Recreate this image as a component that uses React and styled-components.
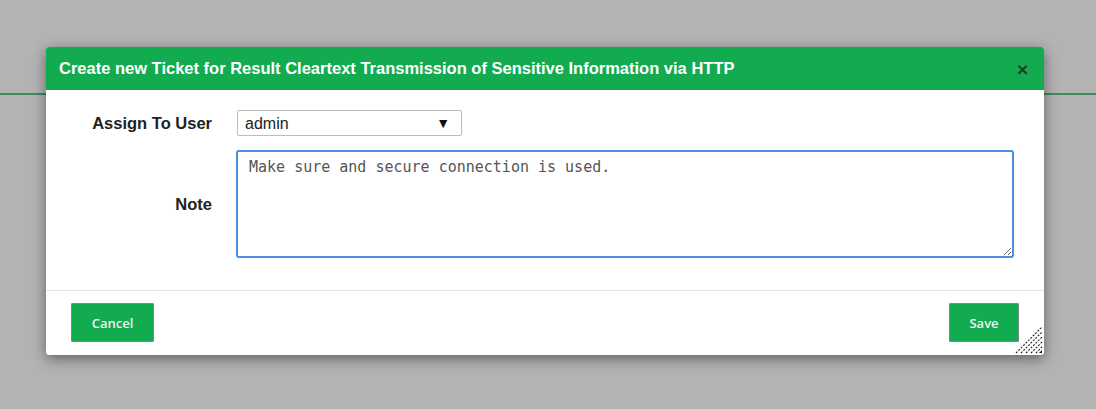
import React from "react";
import styled, { createGlobalStyle } from "styled-components";

const GlobalStyle = createGlobalStyle`
  html, body {
    margin: 0;
    padding: 0;
    background: #b3b3b3;
    font-family: "Liberation Sans", Arial, sans-serif;
  }
`;

const Page = styled.div`
  position: relative;
  width: 1096px;
  height: 409px;
  overflow: hidden;
  background: #b3b3b3;
`;

const PageHeader = styled.div`
  height: 93px;
  border-bottom: 2px solid #3f8b5c;
`;

const Dialog = styled.div`
  position: absolute;
  left: 46px;
  top: 47px;
  width: 998px;
  background: #fff;
  border-radius: 3px;
  box-shadow: 0 4px 14px rgba(0, 0, 0, 0.45);
  display: flex;
  flex-direction: column;
`;

const TitleBar = styled.div`
  height: 43px;
  background: #13ab50;
  border-radius: 3px 3px 0 0;
  display: flex;
  align-items: center;
  justify-content: space-between;
  padding: 0 16px 0 13px;
`;

const Title = styled.span`
  color: #fff;
  font-weight: bold;
  font-size: 16.5px;
`;

const Close = styled.span`
  color: #1d3d2a;
  font-weight: bold;
  font-size: 19px;
  line-height: 1;
  margin-top: 2px;
`;

const Body = styled.div`
  display: grid;
  grid-template-columns: 166px 778px;
  column-gap: 24px;
  row-gap: 14px;
  align-items: center;
  padding: 20px 0 32px;
  border-bottom: 1px solid #e4e4e4;
`;

const Label = styled.label`
  text-align: right;
  font-weight: bold;
  font-size: 16.5px;
  color: #222;
`;

const SelectWrap = styled.div`
  position: relative;
  width: 225px;
  margin-left: 1px;
`;

const Select = styled.select`
  appearance: none;
  width: 100%;
  height: 26px;
  border: 1px solid #bdbdbd;
  border-radius: 2px;
  background: #fff;
  font-family: "Liberation Sans", Arial, sans-serif;
  font-size: 16px;
  color: #222;
  padding: 0 7px;
  outline: none;
`;

const Arrow = styled.span`
  position: absolute;
  right: 12px;
  top: 5px;
  font-size: 14px;
  color: #111;
  pointer-events: none;
`;

const Note = styled.textarea`
  box-sizing: border-box;
  width: 778px;
  height: 108px;
  border: 2px solid #4a8ee0;
  border-radius: 3px;
  padding: 6px 11px;
  font-family: "DejaVu Sans Mono", monospace;
  font-size: 15px;
  color: #555;
  outline: none;
  resize: both;
`;

const Footer = styled.div`
  position: relative;
  display: flex;
  justify-content: space-between;
  padding: 12px 25px 13px 25px;
`;

const Button = styled.button`
  height: 39px;
  width: ${(p) => p.$w}px;
  background: #13ab50;
  border: 1px solid #7a8a80;
  border-radius: 1px;
  color: #eaf7ee;
  font-family: "Open Sans", "Liberation Sans", sans-serif;
  font-weight: 600;
  font-size: 13px;
  cursor: pointer;
`;

const Grip = styled.svg`
  position: absolute;
  right: 1px;
  bottom: 1px;
`;

export default function App() {
  return (
    <Page>
      <GlobalStyle />
      <PageHeader />
      <Dialog>
        <TitleBar>
          <Title>
            Create new Ticket for Result Cleartext Transmission of Sensitive
            Information via HTTP
          </Title>
          <Close>×</Close>
        </TitleBar>
        <Body>
          <Label>Assign To User</Label>
          <SelectWrap>
            <Select defaultValue="admin">
              <option value="admin">admin</option>
            </Select>
            <Arrow>▼</Arrow>
          </SelectWrap>
          <Label>Note</Label>
          <Note defaultValue="Make sure and secure connection is used." />
        </Body>
        <Footer>
          <Button $w={83}>Cancel</Button>
          <Button $w={70}>Save</Button>
          <Grip width="28" height="28" viewBox="0 0 28 28">
            {[6, 11, 16, 21, 26].map((o) => (
              <line
                key={o}
                x1={27 - o}
                y1="27"
                x2="27"
                y2={27 - o}
                stroke="#222"
                strokeWidth="1.1"
                strokeDasharray="2 1.4"
              />
            ))}
            <path d="M24 27 L27 24 L27 27 Z" fill="#111" />
          </Grip>
        </Footer>
      </Dialog>
    </Page>
  );
}
